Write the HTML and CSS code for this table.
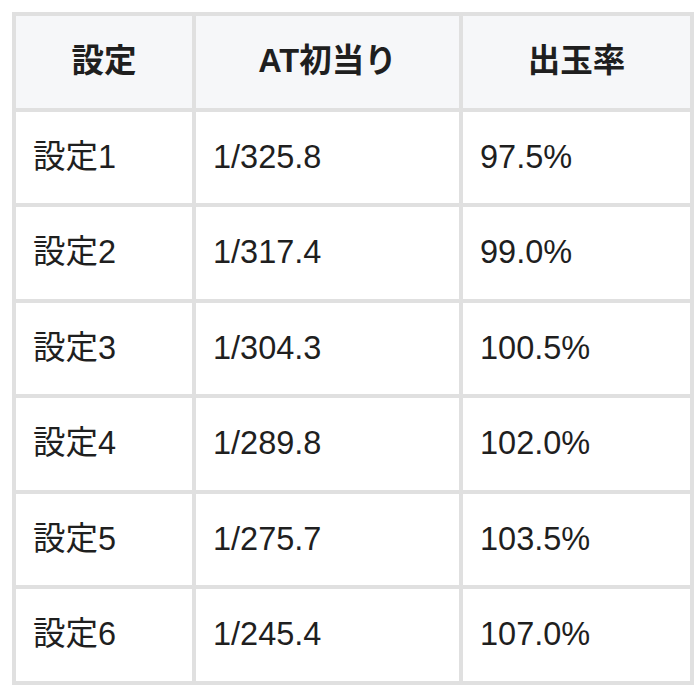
FILE: index.html
```html
<!DOCTYPE html>
<html lang="ja">
<head>
<meta charset="utf-8">
<link rel="stylesheet" href="styles.css">
</head>
<body>
<table class="spec">
  <colgroup>
    <col class="c1"><col class="c2"><col class="c3">
  </colgroup>
  <thead>
    <tr><th>設定</th><th>AT初当り</th><th>出玉率</th></tr>
  </thead>
  <tbody>
    <tr><td>設定1</td><td>1/325.8</td><td>97.5%</td></tr>
    <tr><td>設定2</td><td>1/317.4</td><td>99.0%</td></tr>
    <tr><td>設定3</td><td>1/304.3</td><td>100.5%</td></tr>
    <tr><td>設定4</td><td>1/289.8</td><td>102.0%</td></tr>
    <tr><td>設定5</td><td>1/275.7</td><td>103.5%</td></tr>
    <tr><td>設定6</td><td>1/245.4</td><td>107.0%</td></tr>
  </tbody>
</table>
</body>
</html>
```
FILE: styles.css
```css
html, body {
  margin: 0;
  background: #ffffff;
}
body {
  padding: 12px;
  font-family: "Liberation Sans", "Noto Sans CJK JP", sans-serif;
  color: #1f1f1f;
}
.spec {
  border-collapse: collapse;
  table-layout: fixed;
  width: 678px;
}
.c1 { width: 180px; }
.c2 { width: 267px; }
.c3 { width: 231px; }
.spec th, .spec td {
  border: 4px solid #e0e0e0;
  height: 95.5px;
  padding: 0 17px;
  font-size: 32.5px;
  line-height: 1.2;
  vertical-align: middle;
  box-sizing: border-box;
}
.spec th {
  background: #f6f7f9;
  font-weight: bold;
  text-align: center;
}
.spec td {
  font-weight: normal;
  text-align: left;
}
```
